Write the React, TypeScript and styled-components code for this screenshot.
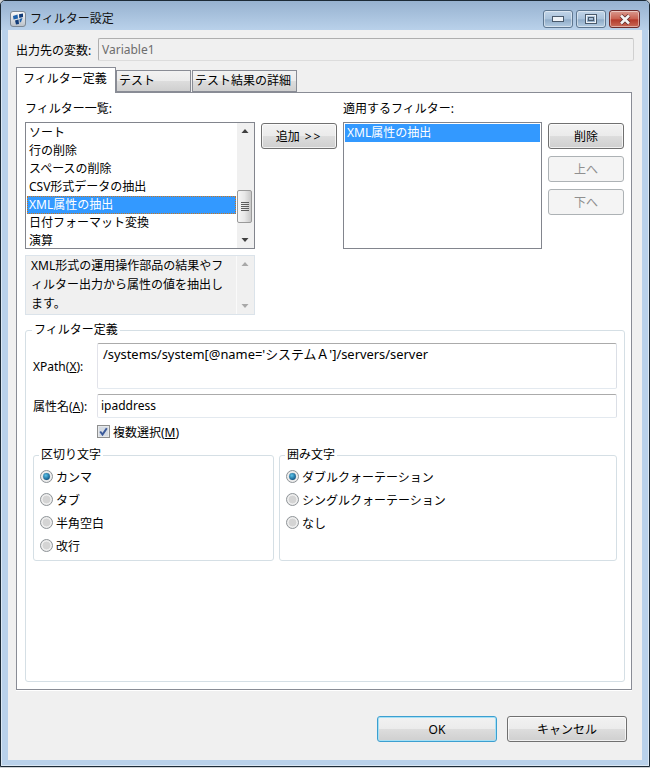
import React from 'react';
import styled, { createGlobalStyle } from 'styled-components';

// == styles =======================================================================================
const GlobalStyle = createGlobalStyle`
  html, body {
    margin: 0;
    padding: 0;
    background: #cfd3d6;
  }
  body {
    font-family: "Noto Sans", "Noto Sans CJK JP", sans-serif;
    font-size: 12px;
    color: #000;
  }
`;

const Frame = styled.div`
  box-sizing: border-box;
  width: 650px;
  height: 767px;
  padding: 0 7px 6px;
  display: flex;
  flex-direction: column;
  background: #b9d1ea;
  border: 1px solid #1c2a36;
  border-radius: 5px 5px 0 0;
  box-shadow: inset 0 0 0 1px #dbe8f4;
`;

const TitleBar = styled.div`
  height: 29px;
  margin: 0 -7px;
  padding: 0 9px 0 9px;
  display: flex;
  align-items: center;
  gap: 4px;
  background: linear-gradient(#97b2d0, #b9d1ea);
  border-radius: 4px 4px 0 0;
`;

const TitleText = styled.div`
  flex: 1;
  line-height: 16px;
  padding-top: 7px;
  color: #111;
`;

const AppIcon = styled.svg`
  width: 16px;
  height: 16px;
  margin-top: 7px;
`;

const Caption = styled.div`
  display: flex;
  gap: 3px;
  align-self: flex-start;
  margin-top: 9px;
`;

const CaptionButton = styled.div<{ $close?: boolean }>`
  box-sizing: border-box;
  width: ${ ( { $close } ) => ( $close ? '31px' : '30px' ) };
  height: 18px;
  display: flex;
  align-items: center;
  justify-content: center;
  border: 1px solid ${ ( { $close } ) => ( $close ? '#6e2b2b' : '#5d7690' ) };
  border-radius: 3px;
  background: ${ ( { $close } ) => (
    $close
      ? 'linear-gradient(#d99a8f, #c9604f 50%, #b43a2b 55%, #c96a58)'
      : 'linear-gradient(#c2d5e8, #a9c2db 50%, #8fabc8 55%, #b4cce2)'
  ) };
  box-shadow: inset 0 0 0 1px rgba(255, 255, 255, 0.45);
`;

const Client = styled.div`
  flex: 1;
  display: flex;
  flex-direction: column;
  background: #f0f0f0;
  padding: 8px 8px 0;
`;

const FieldRow = styled.div`
  display: flex;
  align-items: center;
  height: 23px;
`;

const RowLabel = styled.label<{ $width: number }>`
  flex: none;
  width: ${ ( { $width } ) => $width }px;
  white-space: nowrap;
`;

const ReadOnlyInput = styled.div`
  box-sizing: border-box;
  width: 536px;
  height: 23px;
  line-height: 21px;
  padding-left: 3px;
  color: #6d6d6d;
  background: #f0f0f0;
  border: 1px solid #aeaeae;
  border-bottom-color: #dcdcdc;
  border-right-color: #d0d0d0;
  border-radius: 2px;
`;

const Tabs = styled.div`
  display: flex;
  align-items: flex-end;
  height: 25px;
  margin-top: 6px;
  position: relative;
  z-index: 1;
`;

const Tab = styled.div<{ $active?: boolean; $width: number }>`
  box-sizing: border-box;
  width: ${ ( { $width } ) => $width }px;
  height: ${ ( { $active } ) => ( $active ? '26px' : '22px' ) };
  margin-right: ${ ( { $active } ) => ( $active ? '0' : '1px' ) };
  margin-bottom: ${ ( { $active } ) => ( $active ? '-1px' : '0' ) };
  padding-left: ${ ( { $active } ) => ( $active ? '6px' : '2px' ) };
  line-height: ${ ( { $active } ) => ( $active ? '22px' : '20px' ) };
  white-space: nowrap;
  border: 1px solid #898c95;
  border-bottom: ${ ( { $active } ) => ( $active ? 'none' : '1px solid #898c95' ) };
  background: ${ ( { $active } ) => (
    $active ? '#fff' : 'linear-gradient(#f2f2f2, #ebebeb 50%, #dddddd 50%, #cfcfcf)'
  ) };
`;

const TabPanel = styled.div`
  box-sizing: border-box;
  width: 616px;
  height: 598px;
  padding: 7px 8px 8px 8px;
  background: #fff;
  border: 1px solid #898c95;
  box-shadow: 0 1px 0 #fff;
`;

const ListArea = styled.div`
  display: grid;
  grid-template-columns: 230px 76px 199px 76px;
  column-gap: 6px;
  grid-template-rows: 17px auto;
  row-gap: 5px;
`;

const ColumnLabel = styled.div<{ $col: number }>`
  grid-column: ${ ( { $col } ) => $col };
  line-height: 17px;
  white-space: nowrap;
`;

const LeftStack = styled.div`
  grid-column: 1;
  display: flex;
  flex-direction: column;
  gap: 6px;
`;

const ListBox = styled.div<{ $height: number }>`
  box-sizing: border-box;
  height: ${ ( { $height } ) => $height }px;
  display: flex;
  border: 1px solid #82858d;
  background: #fff;
  overflow: hidden;
`;

const Items = styled.div`
  flex: 1;
  padding: 1px 1px 0;
`;

const Item = styled.div<{ $selected?: boolean; $focused?: boolean }>`
  height: 18px;
  line-height: 18px;
  padding-left: 2px;
  white-space: nowrap;
  color: ${ ( { $selected } ) => ( $selected ? '#fff' : '#000' ) };
  background: ${ ( { $selected } ) => ( $selected ? '#3399ff' : 'transparent' ) };
  outline: ${ ( { $focused } ) => ( $focused ? '1px dotted #c9761f' : 'none' ) };
  outline-offset: -1px;
`;

const ScrollTrack = styled.div<{ $disabled?: boolean }>`
  flex: none;
  width: 17px;
  display: flex;
  flex-direction: column;
  justify-content: space-between;
  background: #f0f0f0;
  border-left: ${ ( { $disabled } ) => ( $disabled ? '1px solid #fafafa' : 'none' ) };
  position: relative;
`;

const Arrow = styled.svg`
  width: 17px;
  height: 17px;
  display: block;
`;

const Thumb = styled.div`
  position: absolute;
  left: 0;
  top: 67px;
  box-sizing: border-box;
  width: 15px;
  height: 33px;
  display: flex;
  flex-direction: column;
  align-items: center;
  justify-content: center;
  gap: 1px;
  border: 1px solid #9a9a9a;
  border-radius: 2px;
  background: linear-gradient(90deg, #f5f5f5, #e8e8e8 50%, #c8c8c8);
`;

const Grip = styled.div`
  width: 8px;
  height: 1px;
  background: #5c5c5c;
`;

const Description = styled.div`
  box-sizing: border-box;
  height: 60px;
  display: flex;
  background: #f0f0f0;
  border: 1px solid #dbe3ea;
`;

const DescriptionText = styled.div`
  flex: 1;
  padding: 0 12px 0 5px;
  line-height: 19px;
  line-break: anywhere;
`;

const AddCell = styled.div`
  padding-top: 1px;
`;

const ButtonColumn = styled.div`
  grid-column: 4;
  display: flex;
  flex-direction: column;
  gap: 7px;
  padding-top: 1px;
`;

const PushButton = styled.button<{ $default?: boolean; $width?: number }>`
  box-sizing: border-box;
  width: ${ ( { $width } ) => $width ?? 76 }px;
  height: 26px;
  padding: 0;
  flex: none;
  font: inherit;
  color: #000;
  border: 1px solid ${ ( { $default } ) => ( $default ? '#3c9fd0' : '#707070' ) };
  border-radius: 3px;
  background: linear-gradient(#f2f2f2, #ebebeb 48%, #dddddd 50%, #cfcfcf);
  box-shadow: inset 0 0 0 1px ${ ( { $default } ) => ( $default ? '#a6e0f5' : 'rgba(255, 255, 255, 0.7)' ) };

  &:disabled {
    color: #8f8f8f;
    border-color: #adb2b5;
    background: #f4f4f4;
    box-shadow: none;
  }
`;

const Chevrons = styled.span`
  margin-left: 5px;
  letter-spacing: 2px;
`;

const DefinitionGroup = styled.fieldset`
  box-sizing: border-box;
  width: 600px;
  height: 360px;
  margin: 7px 0 0;
  padding: 5px 7px 0;
  border: 1px solid #d5dfe5;
  border-radius: 3px;
`;

const GroupTitle = styled.legend`
  padding: 0 2px;
  margin-left: -1px;
  line-height: 16px;
`;

const FormRow = styled.div<{ $height: number }>`
  display: flex;
  align-items: center;
  height: ${ ( { $height } ) => $height }px;
  margin-bottom: 5px;
`;

const TextBox = styled.div<{ $multiline?: boolean }>`
  box-sizing: border-box;
  width: 520px;
  height: 100%;
  padding: ${ ( { $multiline } ) => ( $multiline ? '2px 5px' : '0 3px' ) };
  font-size: ${ ( { $multiline } ) => ( $multiline ? '12.9px' : '12px' ) };
  line-height: ${ ( { $multiline } ) => ( $multiline ? '17px' : '22px' ) };
  white-space: nowrap;
  background: #fff;
  border: 1px solid #ababab;
  border-left-color: #e2e3ea;
  border-right-color: #dbdfe6;
  border-bottom-color: #e3e9ef;
  border-radius: 2px;
`;

const CheckRow = styled.div`
  display: flex;
  align-items: center;
  gap: 3px;
  height: 17px;
  margin: 4px 0 0 64px;
`;

const CheckBox = styled.svg`
  width: 13px;
  height: 13px;
  flex: none;
`;

const GroupRow = styled.div`
  display: flex;
  gap: 5px;
  margin-top: 7px;
`;

const OptionGroup = styled.fieldset<{ $width: number }>`
  box-sizing: border-box;
  width: ${ ( { $width } ) => $width }px;
  height: 114px;
  margin: 0;
  padding: 2px 6px 0;
  border: 1px solid #d5dfe5;
  border-radius: 3px;
`;

const Option = styled.div`
  display: flex;
  align-items: center;
  gap: 3px;
  height: 23px;
`;

const RadioMark = styled.svg`
  width: 13px;
  height: 13px;
  flex: none;
`;

const Footer = styled.div`
  display: flex;
  justify-content: flex-end;
  gap: 10px;
  padding: 26px 7px 0 0;
`;

// == components ===================================================================================
function ScrollArrow( { up, color }: { up?: boolean; color: string } ): JSX.Element {
  return (
    <Arrow viewBox="0 0 17 17">
      <path d={ up ? 'M8 6 L4.5 10 H11.5 Z' : 'M4.5 7 H11.5 L8 11 Z' } fill={ color } />
    </Arrow>
  );
}

function Radio( { checked }: { checked?: boolean } ): JSX.Element {
  return (
    <RadioMark viewBox="0 0 13 13">
      <defs>
        <radialGradient id="radioDot" cx="0.4" cy="0.35" r="0.7">
          <stop offset="0" stopColor="#5cc4ea" />
          <stop offset="1" stopColor="#0b4f80" />
        </radialGradient>
      </defs>
      <circle cx="6.5" cy="6.5" r="6" fill="#e8e8e8" stroke="#8f9498" />
      <circle cx="6.5" cy="6.5" r="4.4" fill="#d4d4d4" stroke="#f6f6f6" strokeWidth="0.8" />
      { checked && <circle cx="6.5" cy="6.5" r="3.4" fill="url(#radioDot)" /> }
    </RadioMark>
  );
}

function App(): JSX.Element {
  return (
    <>
      <GlobalStyle />
      <Frame>
        <TitleBar>
          <AppIcon viewBox="0 0 16 16">
            <defs>
              <linearGradient id="iconBack" x1="0" y1="0" x2="0" y2="1">
                <stop offset="0" stopColor="#fbfbfb" />
                <stop offset="1" stopColor="#b9c0c8" />
              </linearGradient>
            </defs>
            <rect x="0.5" y="0.5" width="15" height="15" rx="2.5" fill="url(#iconBack)" stroke="#7c8894" />
            <path d="M3 5 L7.5 3.5 L8 7.5 L3.5 8.5 Z" fill="#1d62ad" />
            <path d="M9 3.2 L13 2.5 L13 6 L9.3 7 Z" fill="#123c78" />
            <path d="M5 9.5 L8.5 8.5 L9 13 L6 13.5 Z" fill="#123c78" />
            <path d="M9.5 8 L12.5 7 L11 11 L9.8 11.5 Z" fill="#1d62ad" />
          </AppIcon>
          <TitleText>フィルター設定</TitleText>
          <Caption>
            <CaptionButton>
              <svg width="12" height="6" viewBox="0 0 12 6">
                <rect x="0.5" y="0.5" width="11" height="5" fill="#eef3f8" stroke="#4a5a6c" />
              </svg>
            </CaptionButton>
            <CaptionButton>
              <svg width="12" height="10" viewBox="0 0 12 10">
                <rect x="1" y="1" width="10" height="8" fill="none" stroke="#eef3f8" strokeWidth="2" />
                <rect x="0.5" y="0.5" width="11" height="9" fill="none" stroke="#4a5a6c" strokeWidth="1" />
                <rect x="3.5" y="3.5" width="5" height="3" fill="none" stroke="#4a5a6c" strokeWidth="1" />
              </svg>
            </CaptionButton>
            <CaptionButton $close>
              <svg width="14" height="11" viewBox="0 0 14 11">
                <path d="M3 1.5 L11 9.5 M11 1.5 L3 9.5" stroke="#5b2a2a" strokeWidth="4" />
                <path d="M3 1.5 L11 9.5 M11 1.5 L3 9.5" stroke="#f4f4f4" strokeWidth="2.6" />
              </svg>
            </CaptionButton>
          </Caption>
        </TitleBar>

        <Client>
          <FieldRow>
            <RowLabel $width={ 82 }>出力先の変数:</RowLabel>
            <ReadOnlyInput>Variable1</ReadOnlyInput>
          </FieldRow>

          <Tabs>
            <Tab $active $width={ 100 }>フィルター定義</Tab>
            <Tab $width={ 75 }>テスト</Tab>
            <Tab $width={ 105 }>テスト結果の詳細</Tab>
          </Tabs>

          <TabPanel>
            <ListArea>
              <ColumnLabel $col={ 1 }>フィルター一覧:</ColumnLabel>
              <ColumnLabel $col={ 3 }>適用するフィルター:</ColumnLabel>
              <LeftStack>
                <ListBox $height={ 127 }>
                  <Items>
                    <Item>ソート</Item>
                    <Item>行の削除</Item>
                    <Item>スペースの削除</Item>
                    <Item>CSV形式データの抽出</Item>
                    <Item $selected $focused>XML属性の抽出</Item>
                    <Item>日付フォーマット変換</Item>
                    <Item>演算</Item>
                  </Items>
                  <ScrollTrack>
                    <ScrollArrow up color="#404040" />
                    <Thumb>
                      <Grip />
                      <Grip />
                      <Grip />
                      <Grip />
                      <Grip />
                    </Thumb>
                    <ScrollArrow color="#404040" />
                  </ScrollTrack>
                </ListBox>
                <Description>
                  <DescriptionText>
                    XML形式の運用操作部品の結果やフィルター出力から属性の値を抽出します。
                  </DescriptionText>
                  <ScrollTrack $disabled>
                    <ScrollArrow up color="#a8a8a8" />
                    <ScrollArrow color="#a8a8a8" />
                  </ScrollTrack>
                </Description>
              </LeftStack>
              <AddCell>
                <PushButton>追加<Chevrons>&gt;&gt;</Chevrons></PushButton>
              </AddCell>
              <ListBox $height={ 127 }>
                <Items>
                  <Item $selected>XML属性の抽出</Item>
                </Items>
              </ListBox>
              <ButtonColumn>
                <PushButton>削除</PushButton>
                <PushButton disabled>上へ</PushButton>
                <PushButton disabled>下へ</PushButton>
              </ButtonColumn>
            </ListArea>

            <DefinitionGroup>
              <GroupTitle>フィルター定義</GroupTitle>
              <FormRow $height={ 46 }>
                <RowLabel $width={ 64 }>XPath(<u>X</u>):</RowLabel>
                <TextBox $multiline>/systems/system[@name='システムＡ']/servers/server</TextBox>
              </FormRow>
              <FormRow $height={ 24 }>
                <RowLabel $width={ 64 }>属性名(<u>A</u>):</RowLabel>
                <TextBox>ipaddress</TextBox>
              </FormRow>
              <CheckRow>
                <CheckBox viewBox="0 0 13 13">
                  <rect x="0.5" y="0.5" width="12" height="12" fill="#e6e8ea" stroke="#8e8f8f" />
                  <rect x="2" y="2" width="9" height="9" fill="#d5dbe3" />
                  <path d="M3.2 6.5 L5.5 9.5 L9.8 3.2" fill="none" stroke="#3b5a9a" strokeWidth="2" />
                </CheckBox>
                <span>複数選択(<u>M</u>)</span>
              </CheckRow>
              <GroupRow>
                <OptionGroup $width={ 241 }>
                  <GroupTitle>区切り文字</GroupTitle>
                  <Option><Radio checked />カンマ</Option>
                  <Option><Radio />タブ</Option>
                  <Option><Radio />半角空白</Option>
                  <Option><Radio />改行</Option>
                </OptionGroup>
                <OptionGroup $width={ 338 }>
                  <GroupTitle>囲み文字</GroupTitle>
                  <Option><Radio checked />ダブルクォーテーション</Option>
                  <Option><Radio />シングルクォーテーション</Option>
                  <Option><Radio />なし</Option>
                </OptionGroup>
              </GroupRow>
            </DefinitionGroup>
          </TabPanel>

          <Footer>
            <PushButton $default $width={ 120 }>OK</PushButton>
            <PushButton $width={ 120 }>キャンセル</PushButton>
          </Footer>
        </Client>
      </Frame>
    </>
  );
}

export default App;
